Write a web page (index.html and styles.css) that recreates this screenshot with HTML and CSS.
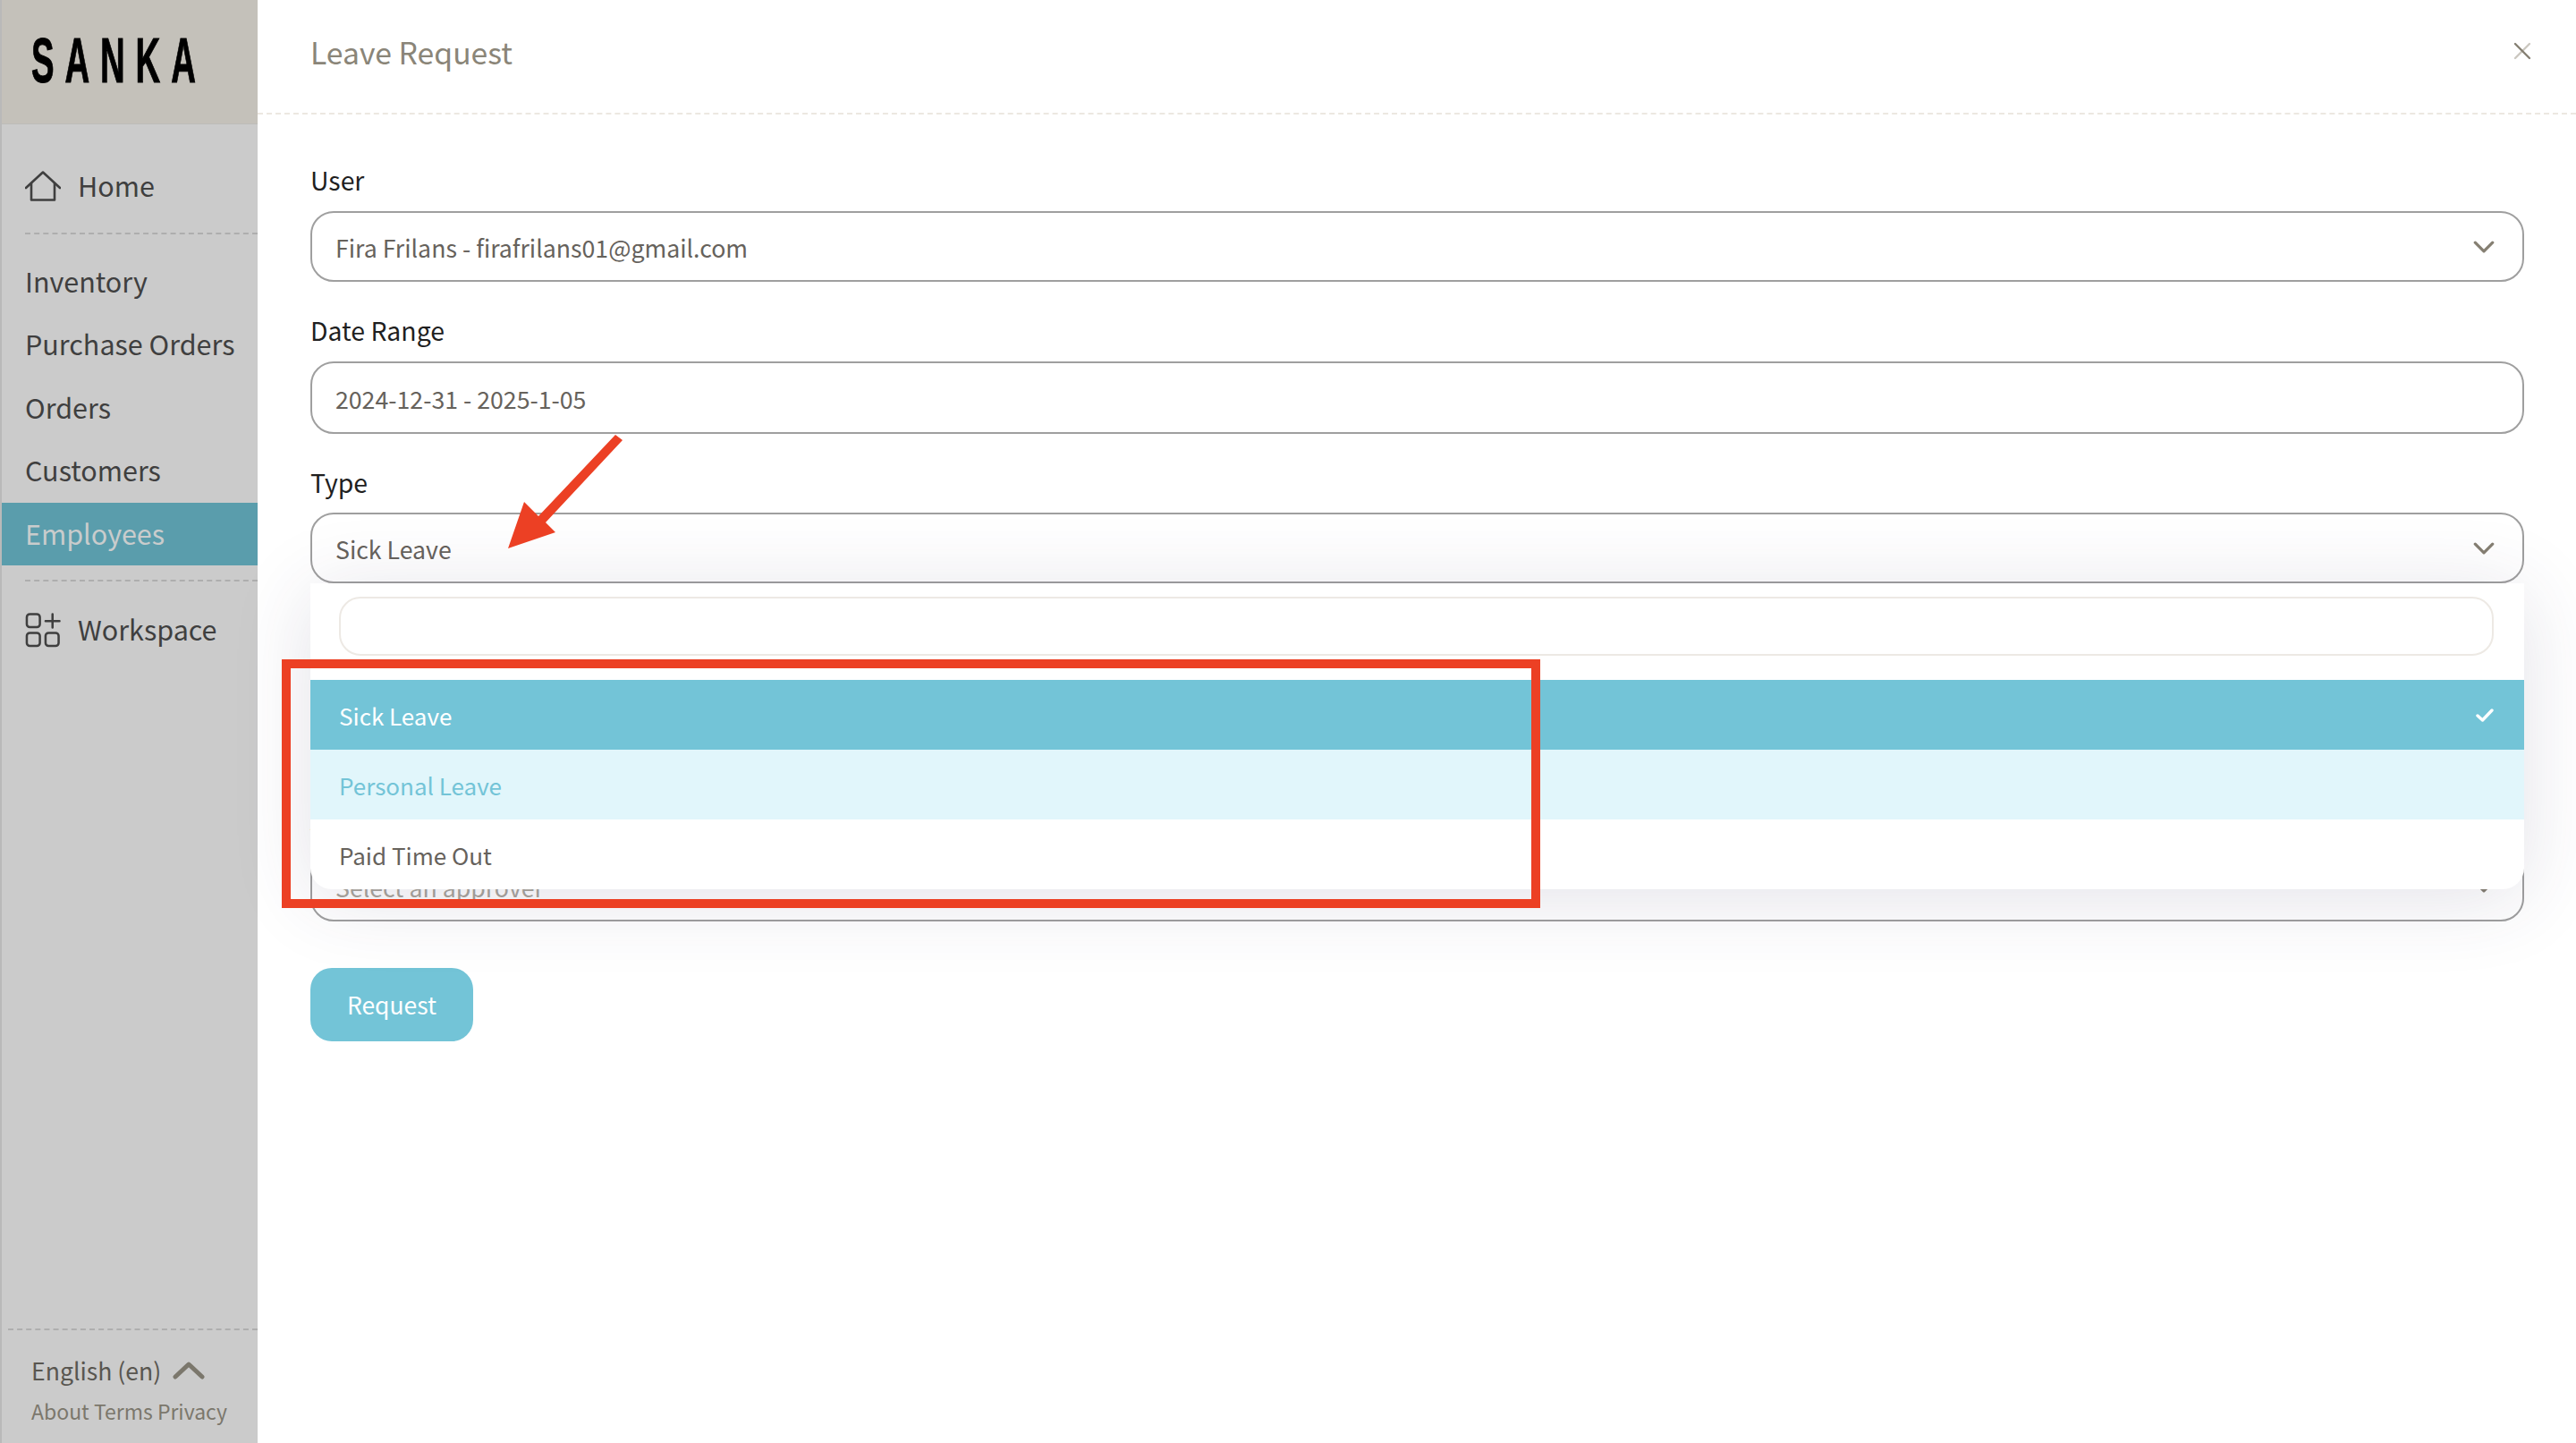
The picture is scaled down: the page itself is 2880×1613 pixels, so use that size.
FILE: index.html
```html
<!DOCTYPE html>
<html lang="en">
<head>
<meta charset="utf-8">
<title>Leave Request</title>
<link rel="stylesheet" href="styles.css">
</head>
<body>
<div class="app">
  <aside class="sidebar">
    <div class="brand"><span class="logo">SANKA</span></div>
    <a class="nav-row icon-row home-row">
      <svg class="nav-icon" viewBox="0 0 40 34" fill="none" stroke="#3f3f3f" stroke-width="2.6" stroke-linejoin="round" stroke-linecap="round"><path d="M1 19 20 1.500 39 19"/><path d="M7 14V32.500H33V14"/></svg>
      <span>Home</span>
    </a>
    <div class="side-rule"></div>
    <nav class="nav-list">
      <a class="nav-row">Inventory</a>
      <a class="nav-row">Purchase Orders</a>
      <a class="nav-row">Orders</a>
      <a class="nav-row">Customers</a>
      <a class="nav-row active">Employees</a>
    </nav>
    <div class="side-rule rule-low"></div>
    <a class="nav-row icon-row work-row">
      <svg class="nav-icon" viewBox="0 0 40 40" fill="none" stroke="#3f3f3f" stroke-width="2.6" stroke-linecap="round"><rect x="1.500" y="1.500" width="15" height="15" rx="3.500"/><rect x="1.500" y="23" width="15" height="15" rx="3.500"/><rect x="23" y="23" width="15" height="15" rx="3.500"/><path d="M23 9.500H39M31 1.500V17"/></svg>
      <span>Workspace</span>
    </a>
    <div class="side-foot">
      <div class="lang"><span>English (en)</span>
        <svg class="lang-chev" viewBox="0 0 36 20" fill="none" stroke="#7b776c" stroke-width="5" stroke-linecap="round" stroke-linejoin="round"><path d="M3 17 18 3 33 17"/></svg>
      </div>
      <div class="legal">About Terms Privacy</div>
    </div>
  </aside>

  <main class="panel">
    <header class="panel-head">
      <h1 class="panel-title">Leave Request</h1>
      <svg class="close" viewBox="0 0 20 20" fill="none" stroke-width="2.400" stroke-linecap="round"><path d="M2 18 18 2" stroke="#cbc8c0"/><path d="M2 2 18 18" stroke="#857f72"/></svg>
    </header>
    <form class="form">
      <div class="field">
        <label class="label">User</label>
        <div class="control">
          <span>Fira Frilans - firafrilans01@gmail.com</span>
          <svg class="chev" viewBox="0 0 22 13" fill="none" stroke="#857f72" stroke-width="3" stroke-linecap="round" stroke-linejoin="round"><path d="M2 2 11 11 20 2"/></svg>
        </div>
      </div>
      <div class="field">
        <label class="label">Date Range</label>
        <div class="control date-control"><span>2024-12-31 - 2025-1-05</span></div>
      </div>
      <div class="field type-field">
        <label class="label">Type</label>
        <div class="control">
          <span>Sick Leave</span>
          <svg class="chev" viewBox="0 0 22 13" fill="none" stroke="#857f72" stroke-width="3" stroke-linecap="round" stroke-linejoin="round"><path d="M2 2 11 11 20 2"/></svg>
        </div>
        <div class="dropdown">
          <div class="search-wrap"><div class="search"></div></div>
          <div class="option selected"><span>Sick Leave</span>
            <svg class="check" viewBox="0 0 20 15" fill="none" stroke="#fff" stroke-width="3.400" stroke-linecap="round" stroke-linejoin="round"><path d="M2 8 7.500 13 18 2"/></svg>
          </div>
          <div class="option hover">Personal Leave</div>
          <div class="option">Paid Time Out</div>
        </div>
      </div>
      <div class="field approver-field">
        <label class="label">Approver</label>
        <div class="control placeholder">
          <span>Select an approver</span>
          <svg class="chev" viewBox="0 0 22 13" fill="none" stroke="#857f72" stroke-width="3" stroke-linecap="round" stroke-linejoin="round"><path d="M2 2 11 11 20 2"/></svg>
        </div>
      </div>
      <button class="submit" type="button">Request</button>
    </form>
  </main>
</div>
<div class="callout-box"></div>
<svg class="callout-arrow" viewBox="0 0 140 140"><polygon fill="#ec4024" points="3,131 21,79 37,95 123,4 131,10 45,102 56,113"/></svg>
</body>
</html>
```

FILE: styles.css
```css
* { box-sizing: border-box; }
html, body { margin: 0; height: 100%; }
body {
  font-family: "Noto Sans CJK JP", "Noto Sans", sans-serif;
  background: #fff;
  overflow: hidden;
  position: relative;
}
.app { display: flex; height: 1613px; }

/* sidebar */
.sidebar {
  width: 288px;
  flex: none;
  display: flex;
  flex-direction: column;
  background: #cbcbcb;
  border-left: 2px solid #b9b9b9;
  color: #3f3f3f;
}
.brand {
  height: 139px;
  flex: none;
  padding-left: 33px;
  background: #c4c1ba;
  border-bottom: 1px solid #bcbcb8;
  display: flex;
  align-items: center;
  overflow: hidden;
}
.logo {
  display: block;
  position: relative;
  top: -1px;
  font-family: "Liberation Sans", sans-serif;
  font-weight: 700;
  font-size: 71px;
  line-height: 68px;
  letter-spacing: 22px;
  color: #000;
  transform: scaleX(.54);
  transform-origin: left center;
  white-space: nowrap;
  -webkit-text-stroke: 1px #000;
}
.nav-row {
  display: flex;
  align-items: center;
  height: 70.5px;
  padding: 0 0 1.500px 26px;
  font-size: 30.5px;
  line-height: 1;
  white-space: nowrap;
}
.icon-row { gap: 19px; padding-bottom: 0; }
.icon-row span { position: relative; top: -1px; }
.nav-icon { width: 40px; height: 34px; flex: none; }
.home-row { margin-top: 34px; }
.work-row { margin-top: 19px; }
.work-row .nav-icon { height: 39px; }
.side-rule {
  margin: 16px 0 0 26px;
  border-top: 2px dashed #aeaeae;
  flex: none;
}
.nav-list { margin-top: 18px; }
.nav-row.active { background: #5a9dac; color: #c9cccc; }
.rule-low { margin-top: 16px; }
.side-foot {
  margin-top: auto;
  margin-left: 7px;
  border-top: 2px dashed #aeaeae;
  padding: 27px 0 0 26px;
  height: 128px;
}
.lang {
  display: flex;
  align-items: center;
  gap: 13px;
  font-size: 26.6px;
  line-height: 36px;
  color: #595650;
}
.lang-chev { width: 36px; height: 20px; }
.legal {
  margin-top: 12px;
  font-size: 23px;
  line-height: 30px;
  color: #7b776c;
  white-space: nowrap;
}

/* panel */
.panel { flex: 1; min-width: 0; background: #fff; }
.panel-head {
  height: 128px;
  padding: 0 50px 12px 59px;
  display: flex;
  align-items: center;
  justify-content: space-between;
  border-bottom: 2px dashed #ece8e1;
}
.panel-title {
  margin: 0;
  font-size: 33.7px;
  font-weight: 400;
  color: #8a8578;
}
.close { width: 20px; height: 20px; flex: none; }
.form { padding: 54px 58px 0 59px; }
.field { position: relative; margin-bottom: 35px; }
.label {
  display: block;
  height: 40px;
  margin-bottom: 14px;
  font-size: 28.4px;
  line-height: 38px;
  color: #1f1f1f;
}
.control {
  height: 79px;
  display: flex;
  align-items: center;
  justify-content: space-between;
  padding: 0 31px 0 26px;
  border: 2px solid #9f9f9f;
  border-radius: 26px;
  font-size: 26.7px;
  color: #66625c;
}
.control span { position: relative; top: 1px; }
.date-control { height: 81px; }
.chev { width: 24px; height: 14px; flex: none; }
.type-field .label { margin-bottom: 13px; }
.type-field { margin-bottom: 0; }
.dropdown {
  position: absolute;
  top: 100%;
  left: 0;
  right: 0;
  z-index: 5;
  background: #fff;
  border-radius: 0 0 24px 24px;
  box-shadow: 0 10px 90px rgba(60, 50, 90, .14);
  height: 342px;
}
.search-wrap { padding: 15px 34px 27px 32px; }
.search {
  height: 66px;
  border: 2px solid #ede9e4;
  border-radius: 24px;
}
.option {
  height: 78px;
  display: flex;
  align-items: center;
  justify-content: space-between;
  padding: 0 34px 0 32px;
  font-size: 26px;
  color: #66625c;
}
.option.selected { background: #73c4d7; color: #fff; }
.option.hover { background: #e1f6fb; color: #73c4d7; }
.check { width: 20px; height: 15px; }
.approver-field { margin-top: 245px; margin-bottom: 52px; }
.placeholder { color: #a9a59c; }
.submit {
  display: block;
  width: 182px;
  height: 82px;
  padding: 0 0 2px;
  border: 0;
  border-radius: 24px;
  background: #73c4d7;
  color: #fff;
  font: inherit;
  font-size: 26.5px;
}

/* annotations laid over the screenshot */
.callout-box {
  position: absolute;
  left: 315px;
  top: 737px;
  width: 1407px;
  height: 278px;
  border: 10px solid #ec4024;
  z-index: 10;
}
.callout-arrow {
  position: absolute;
  left: 565px;
  top: 482px;
  width: 140px;
  height: 140px;
  z-index: 10;
}
```
